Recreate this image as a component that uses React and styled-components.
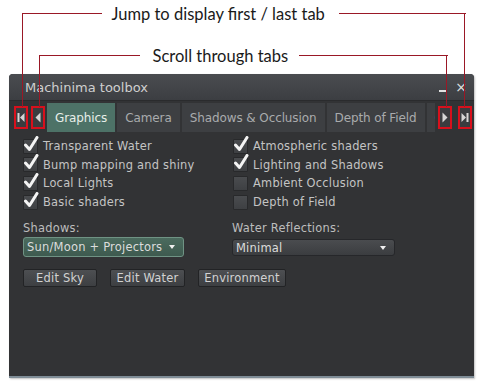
import React from 'react'
import styled, { createGlobalStyle } from 'styled-components'

const GlobalStyle = createGlobalStyle`
    html, body {
        margin: 0;
        padding: 0;
        background: #ffffff;
    }
`

const leftChecks = [
    { label: 'Transparent Water', on: true },
    { label: 'Bump mapping and shiny', on: true },
    { label: 'Local Lights', on: true },
    { label: 'Basic shaders', on: true },
]

const rightChecks = [
    { label: 'Atmospheric shaders', on: true },
    { label: 'Lighting and Shadows', on: true },
    { label: 'Ambient Occlusion', on: false },
    { label: 'Depth of Field', on: false },
]

const tabs = ['Graphics', 'Camera', 'Shadows & Occlusion', 'Depth of Field', 'Color']

function Arrow({ dir, jump }) {
    const flip = dir === 'right' ? 'scale(-1,1) translate(-10,0)' : undefined
    return (
        <svg width="10" height="19" viewBox="0 0 10 19">
            <g transform={flip}>
                {jump && <rect x="1.5" y="5" width="2" height="9" fill="#d6d6d6" />}
                <path d={jump ? 'M8.5 5 L4 9.5 L8.5 14 Z' : 'M7.5 4.5 L2.5 9.5 L7.5 14.5 Z'} fill="#d6d6d6" />
            </g>
        </svg>
    )
}

function Check() {
    return (
        <svg width="17" height="17" viewBox="0 0 17 17">
            <path
                d="M2.5 9 L6.5 13.5 L14 1.5"
                fill="none"
                stroke="#f4f4f4"
                strokeWidth="3"
                strokeLinecap="round"
                strokeLinejoin="round"
            />
        </svg>
    )
}

function CheckRow({ label, on }) {
    return (
        <CheckLine>
            <Box>{on && <Check />}</Box>
            <span>{label}</span>
        </CheckLine>
    )
}

function App() {
    return (
        <Page>
            <GlobalStyle />

            <Callout $left={22} $top={13} $width={443} $height={94}>
                <CalloutHead>
                    <Line style={{ width: 80 }} />
                    <CalloutText $gapL={10} $gapR={14}>Jump to display first / last tab</CalloutText>
                    <Line $grow />
                </CalloutHead>
            </Callout>
            <Callout $left={39} $top={55} $width={408} $height={52}>
                <CalloutHead>
                    <Line style={{ width: 101 }} />
                    <CalloutText $gapL={13} $gapR={11}>Scroll through tabs</CalloutText>
                    <Line $grow />
                </CalloutHead>
            </Callout>

            <Window>
                <TitleBar>
                    <Title>Machinima toolbox</Title>
                    <TitleButtons>
                        <Minimize />
                        <Close>×</Close>
                    </TitleButtons>
                </TitleBar>

                <TabRow>
                    <ScrollButton>
                        <Arrow dir="left" jump />
                    </ScrollButton>
                    <ScrollButton>
                        <Arrow dir="left" />
                    </ScrollButton>
                    <Tabs>
                        {tabs.map((t, i) => (
                            <Tab key={t} $active={i === 0}>
                                {t}
                            </Tab>
                        ))}
                    </Tabs>
                    <ScrollButton>
                        <Arrow dir="right" />
                    </ScrollButton>
                    <ScrollButton $last>
                        <Arrow dir="right" jump />
                    </ScrollButton>
                </TabRow>

                <Panel>
                    <CheckGrid>
                        <CheckColumn>
                            {leftChecks.map((c) => (
                                <CheckRow key={c.label} {...c} />
                            ))}
                        </CheckColumn>
                        <CheckColumn>
                            {rightChecks.map((c) => (
                                <CheckRow key={c.label} {...c} />
                            ))}
                        </CheckColumn>
                    </CheckGrid>

                    <SelectGrid>
                        <Field>
                            <FieldLabel>Shadows:</FieldLabel>
                            <Select $width={161} $highlight>
                                <span>Sun/Moon + Projectors</span>
                                <Caret />
                            </Select>
                        </Field>
                        <Field>
                            <FieldLabel>Water Reflections:</FieldLabel>
                            <Select $width={163}>
                                <span>Minimal</span>
                                <Caret />
                            </Select>
                        </Field>
                    </SelectGrid>

                    <ButtonRow>
                        <Button style={{ width: 74 }}>Edit Sky</Button>
                        <Button style={{ width: 75 }}>Edit Water</Button>
                        <Button style={{ width: 88 }}>Environment</Button>
                    </ButtonRow>
                </Panel>
            </Window>
        </Page>
    )
}

const Page = styled.div`
    position: relative;
    width: 481px;
    height: 387px;
    padding-top: 74px;
    box-sizing: border-box;
    overflow: hidden;
    background: #ffffff;
`

const Callout = styled.div`
    position: absolute;
    z-index: 2;
    left: ${(p) => p.$left}px;
    top: ${(p) => p.$top}px;
    width: ${(p) => p.$width}px;
    height: ${(p) => p.$height}px;
    border-left: 1.5px solid #9a1826;
    border-right: 1.5px solid #9a1826;
    box-sizing: border-box;
`

const CalloutHead = styled.div`
    display: flex;
    align-items: center;
    height: 1px;
    margin-left: -1.5px;
    margin-right: -1.5px;
`

const Line = styled.div`
    height: 1.5px;
    background: #9a1826;
    flex: ${(p) => (p.$grow ? '1' : 'none')};
`

const CalloutText = styled.span`
    font-family: Lato, 'Liberation Sans', sans-serif;
    font-size: 16.5px;
    color: #1a1a1a;
    white-space: nowrap;
    margin: 0 ${(p) => p.$gapR}px 0 ${(p) => p.$gapL}px;
`

const Window = styled.div`
    margin-left: 9px;
    width: 465px;
    height: 304px;
    display: flex;
    flex-direction: column;
    background: #323335;
    border-radius: 4px 4px 0 0;
    border-bottom: 2px solid #7e8c96;
    box-sizing: border-box;
    font-family: 'DejaVu Sans', sans-serif;
    color: #c9c9c9;
    box-shadow: 1px 1px 2px rgba(0, 0, 0, 0.25);
`

const TitleBar = styled.div`
    height: 26px;
    display: flex;
    align-items: center;
    justify-content: space-between;
    padding: 0 7px 0 16px;
    background: linear-gradient(#4a4c50, #3c3e42);
    border-radius: 4px 4px 0 0;
    border-bottom: 1px solid #2a2b2d;
`

const Title = styled.span`
    font-size: 13px;
    color: #cfcfcf;
`

const TitleButtons = styled.div`
    display: flex;
    align-items: center;
    gap: 9px;
`

const Minimize = styled.span`
    width: 7px;
    height: 2px;
    margin-top: 8px;
    background: #e0e0e0;
`

const Close = styled.span`
    font-size: 14px;
    color: #e0e0e0;
`

const TabRow = styled.div`
    height: 29px;
    margin-top: 2px;
    display: flex;
    align-items: center;
    padding: 0 2px 0 5px;
    gap: 3px;
`

const ScrollButton = styled.div`
    width: 10px;
    height: 19px;
    border: 2px solid #d8101c;
    display: flex;
    align-items: center;
    justify-content: center;
    background: #3a3c3f;
    margin-left: ${(p) => (p.$last ? '3px' : '0')};
`

const Tabs = styled.div`
    flex: 1;
    display: flex;
    align-self: stretch;
    gap: 2px;
    overflow: hidden;
    margin-left: -1px;
`

const Tab = styled.div`
    flex: none;
    display: flex;
    align-items: center;
    padding: 0 8px;
    font-size: 12px;
    letter-spacing: -0.1px;
    white-space: nowrap;
    color: ${(p) => (p.$active ? '#e8efe9' : '#a9abad')};
    background: ${(p) => (p.$active ? '#4d7267' : '#3d3f42')};
`

const Panel = styled.div`
    flex: 1;
    padding: 5px 15px 0 14px;
    font-size: 11.4px;
    letter-spacing: 0.25px;
`

const CheckGrid = styled.div`
    display: grid;
    grid-template-columns: 210px 1fr;
`

const CheckColumn = styled.div`
    display: flex;
    flex-direction: column;
`

const CheckLine = styled.div`
    height: 18.6px;
    display: flex;
    align-items: center;
    gap: 5px;
    color: #c4c4c4;
`

const Box = styled.div`
    position: relative;
    width: 13px;
    height: 13px;
    background: linear-gradient(#4a4c4f, #3e4043);
    border: 1px solid #28292b;
    border-radius: 1px;

    svg {
        position: absolute;
        left: -1px;
        top: -4px;
    }
`

const SelectGrid = styled.div`
    display: grid;
    grid-template-columns: 209px 1fr;
    margin-top: 10px;
`

const Field = styled.div`
    display: flex;
    flex-direction: column;
`

const FieldLabel = styled.div`
    height: 14px;
    line-height: 14px;
    color: #bdbdbd;
`

const Select = styled.div`
    width: ${(p) => p.$width}px;
    height: ${(p) => (p.$highlight ? '20px' : '17px')};
    margin-top: ${(p) => (p.$highlight ? '2px' : '4px')};
    box-sizing: border-box;
    display: flex;
    align-items: center;
    justify-content: space-between;
    padding: 0 8px 0 3px;
    border-radius: 3px;
    color: #dcdcdc;
    font-size: 11.5px;
    letter-spacing: 0.2px;
    background: ${(p) => (p.$highlight ? 'linear-gradient(#4b6b5e, #3e5a4f)' : 'linear-gradient(#4a4c4f, #3b3d40)')};
    border: 1px solid ${(p) => (p.$highlight ? '#6f9384' : '#26272a')};
`

const Caret = styled.span`
    width: 0;
    height: 0;
    border-left: 3.5px solid transparent;
    border-right: 3.5px solid transparent;
    border-top: 4px solid #f0f0f0;
`

const ButtonRow = styled.div`
    display: flex;
    gap: 13px;
    margin-top: 12px;
`

const Button = styled.div`
    height: 18px;
    box-sizing: border-box;
    display: flex;
    align-items: center;
    justify-content: center;
    font-size: 11.5px;
    letter-spacing: 0.2px;
    color: #d2d2d2;
    background: linear-gradient(#4d4f52, #3d3f42);
    border: 1px solid #222325;
    border-radius: 2px;
`

export default App
